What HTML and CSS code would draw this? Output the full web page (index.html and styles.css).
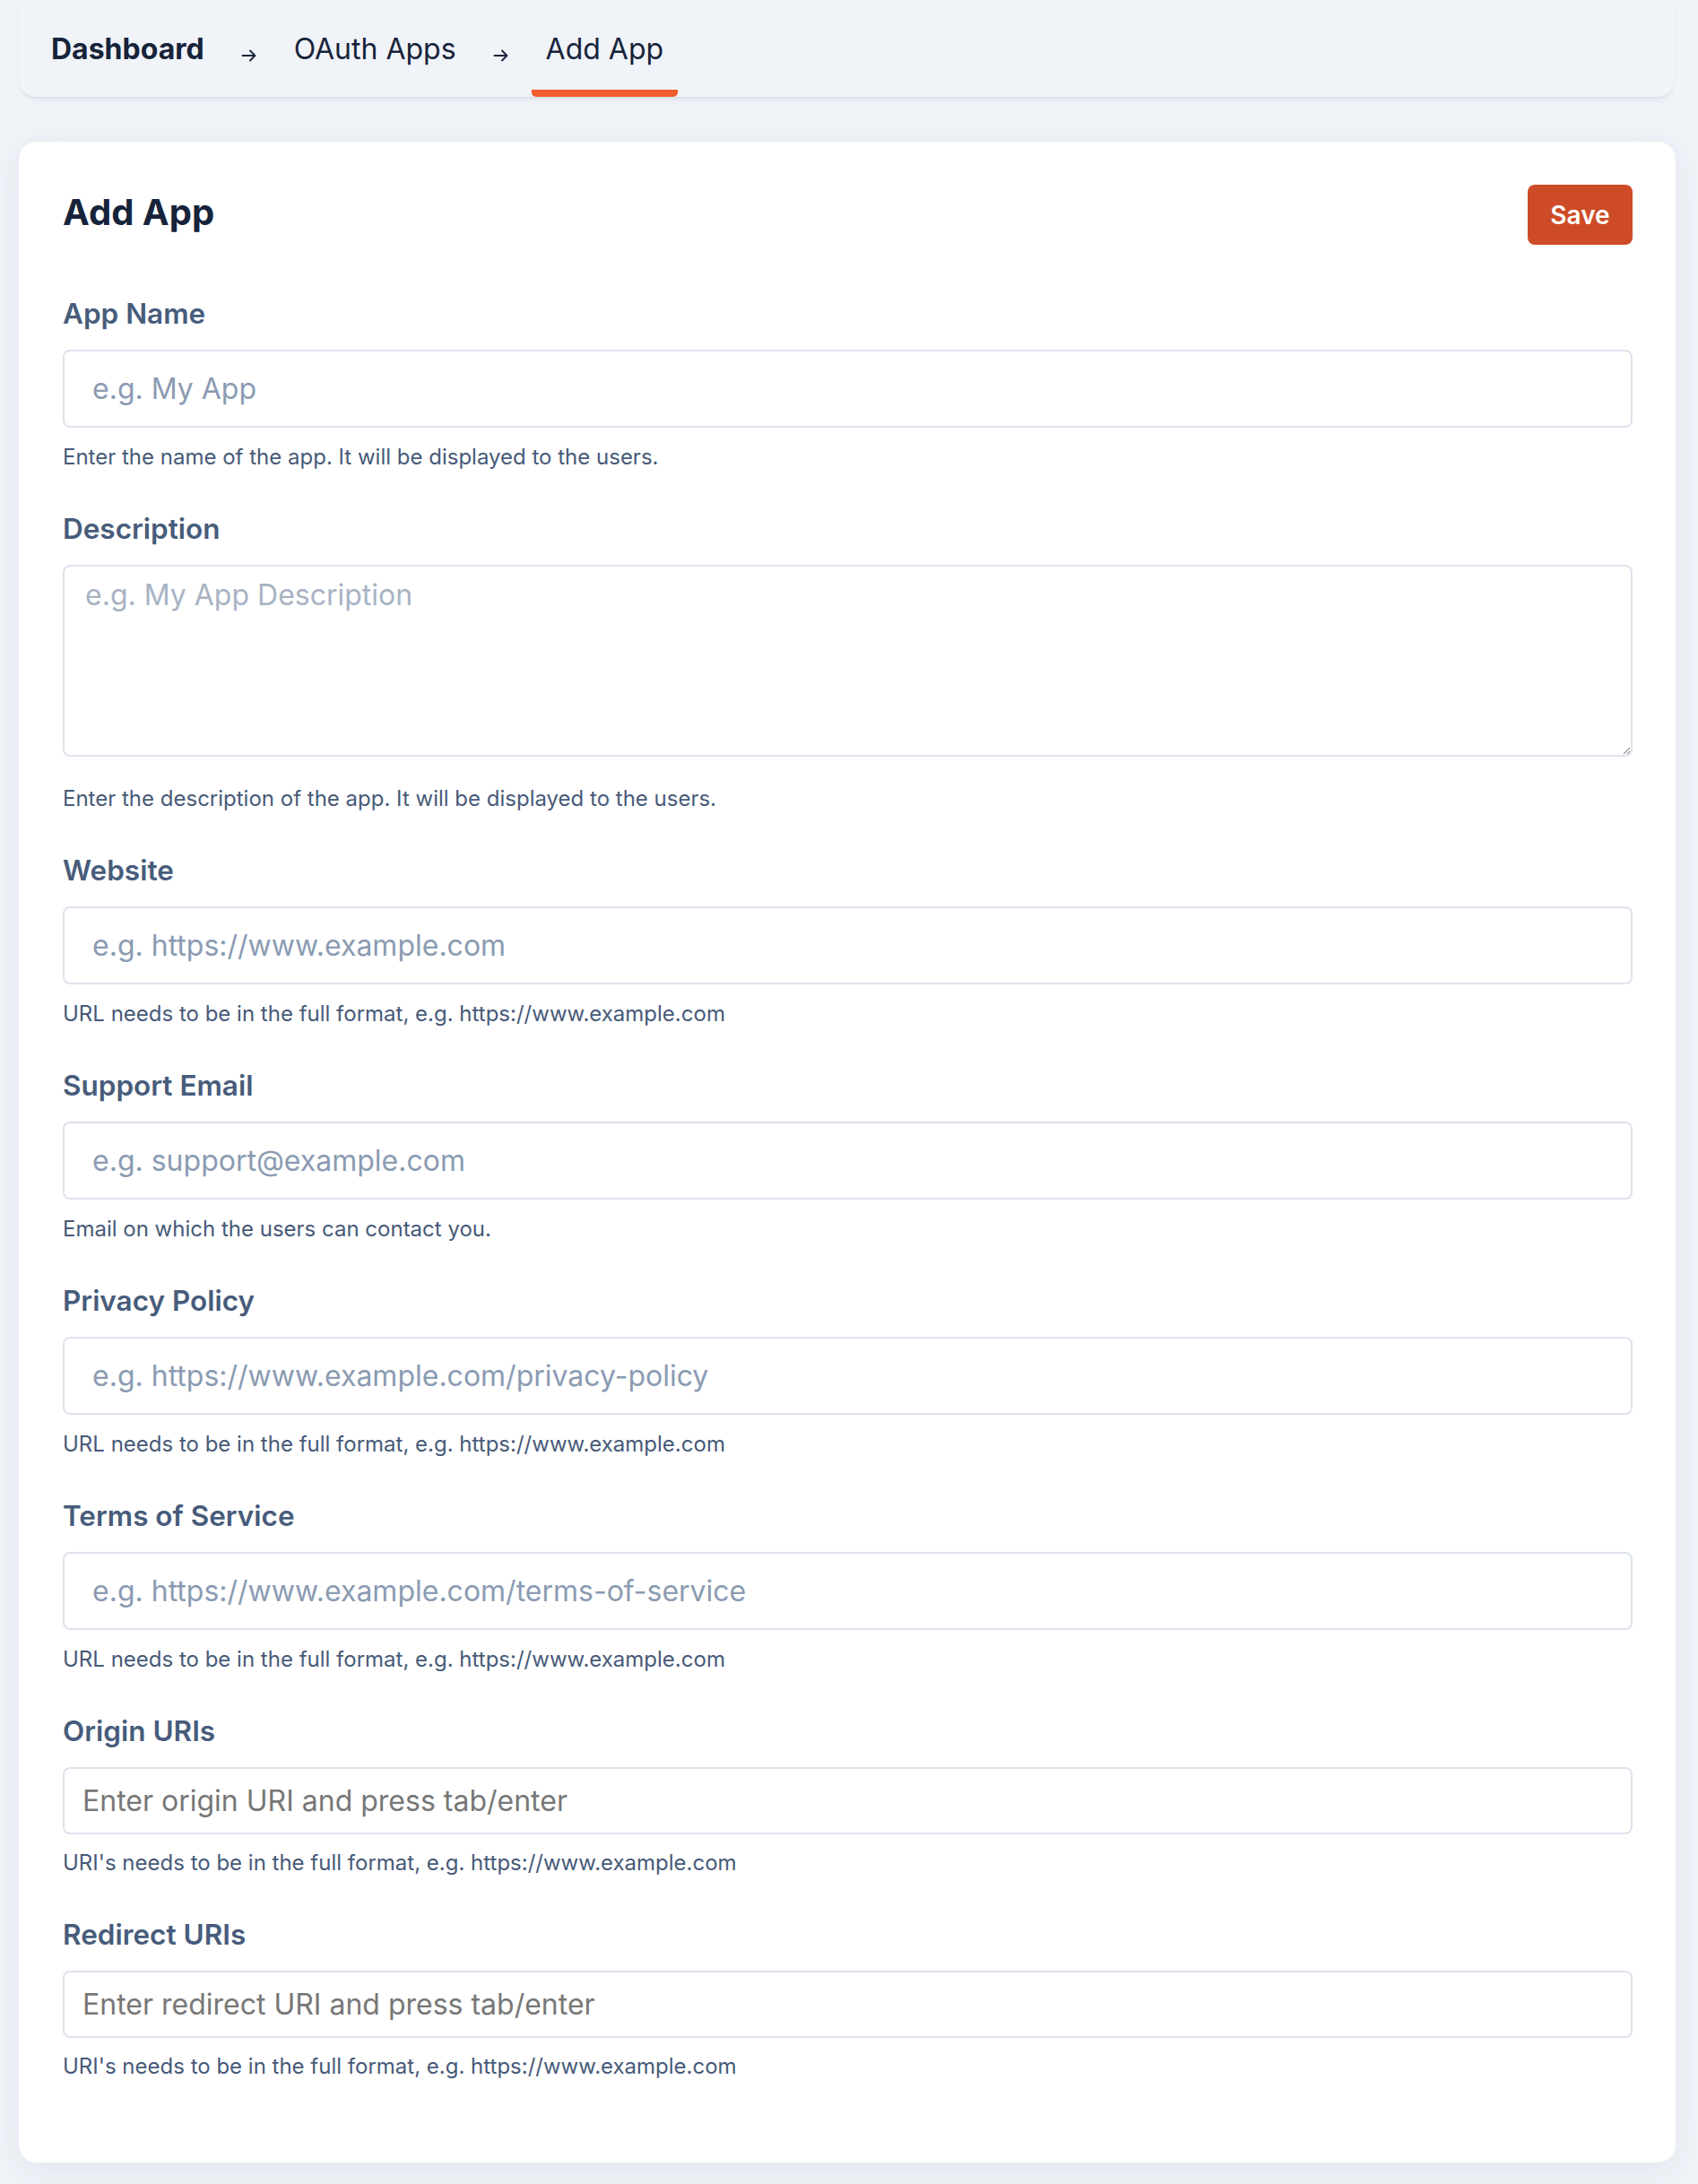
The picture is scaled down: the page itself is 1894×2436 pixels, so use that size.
FILE: index.html
```html
<!DOCTYPE html>
<html lang="en">
<head>
<meta charset="utf-8">
<title>Add App</title>
<link rel="stylesheet" href="styles.css">
</head>
<body>
<nav class="crumbs">
  <a class="crumb crumb--strong">Dashboard</a>
  <svg class="crumb-arrow" width="18" height="16" viewBox="0 0 18 16"><path d="M1.5 8h14M10 2.5l5.5 5.5-5.5 5.5" fill="none" stroke="#16233a" stroke-width="1.8" stroke-linecap="round" stroke-linejoin="round"/></svg>
  <a class="crumb">OAuth Apps</a>
  <svg class="crumb-arrow" width="18" height="16" viewBox="0 0 18 16"><path d="M1.5 8h14M10 2.5l5.5 5.5-5.5 5.5" fill="none" stroke="#16233a" stroke-width="1.8" stroke-linecap="round" stroke-linejoin="round"/></svg>
  <a class="crumb crumb--active">Add App</a>
</nav>

<main class="card">
  <div class="card-head">
    <h1 class="card-title">Add App</h1>
    <button class="btn-save" type="button">Save</button>
  </div>

  <div class="field">
    <label class="field-label">App Name</label>
    <input class="input" type="text" placeholder="e.g. My App">
    <p class="help">Enter the name of the app. It will be displayed to the users.</p>
  </div>

  <div class="field">
    <label class="field-label">Description</label>
    <textarea class="textarea" placeholder="e.g. My App Description"></textarea>
    <p class="help help--textarea">Enter the description of the app. It will be displayed to the users.</p>
  </div>

  <div class="field">
    <label class="field-label">Website</label>
    <input class="input" type="text" placeholder="e.g. https://www.example.com">
    <p class="help">URL needs to be in the full format, e.g. https://www.example.com</p>
  </div>

  <div class="field">
    <label class="field-label">Support Email</label>
    <input class="input" type="text" placeholder="e.g. support@example.com">
    <p class="help">Email on which the users can contact you.</p>
  </div>

  <div class="field">
    <label class="field-label">Privacy Policy</label>
    <input class="input" type="text" placeholder="e.g. https://www.example.com/privacy-policy">
    <p class="help">URL needs to be in the full format, e.g. https://www.example.com</p>
  </div>

  <div class="field">
    <label class="field-label">Terms of Service</label>
    <input class="input" type="text" placeholder="e.g. https://www.example.com/terms-of-service">
    <p class="help">URL needs to be in the full format, e.g. https://www.example.com</p>
  </div>

  <div class="field">
    <label class="field-label">Origin URIs</label>
    <input class="input input--tags" type="text" placeholder="Enter origin URI and press tab/enter">
    <p class="help help--tags">URI's needs to be in the full format, e.g. https://www.example.com</p>
  </div>

  <div class="field field--last">
    <label class="field-label">Redirect URIs</label>
    <input class="input input--tags" type="text" placeholder="Enter redirect URI and press tab/enter">
    <p class="help help--tags">URI's needs to be in the full format, e.g. https://www.example.com</p>
  </div>
</main>
</body>
</html>
```

FILE: styles.css
```css
* { box-sizing: border-box; }

html, body {
  margin: 0;
  padding: 0;
  background: #f0f3f8;
  font-family: Inter, "Noto Sans", "Liberation Sans", sans-serif;
  color: #16233a;
}

body {
  padding-bottom: 26px;
}

/* breadcrumb bar */
.crumbs {
  display: flex;
  align-items: stretch;
  gap: 25px;
  height: 110px;
  margin: 0 26px 0 21px;
  padding-left: 20px;
  border-bottom: 2px solid #dde3eb;
  border-radius: 0 0 20px 20px;
  box-shadow: 0 3px 4px rgba(30, 50, 80, 0.04);
}

.crumb {
  position: relative;
  display: block;
  padding: 31px 16px 0;
  font-size: 32px;
  line-height: 48px;
  font-weight: 400;
  color: #16233a;
  text-decoration: none;
}

.crumb--strong { font-weight: 700; }

.crumb--active::after {
  content: "";
  position: absolute;
  left: 0;
  right: 0;
  bottom: 0;
  height: 8px;
  background: #f15d2c;
  border-radius: 0 0 5px 5px;
}

.crumb-arrow {
  align-self: flex-start;
  margin-top: 54px;
  flex: none;
}

/* card */
.card {
  margin: 48px 25px 0 21px;
  padding: 48px 48px 89px 49px;
  background: #ffffff;
  border-radius: 20px;
  box-shadow: 0 8px 40px rgba(40, 60, 90, 0.07);
}

.card-head {
  display: flex;
  align-items: center;
  justify-content: space-between;
  height: 67px;
  margin-bottom: 53px;
}

.card-title {
  margin: 0;
  font-size: 40px;
  line-height: 48px;
  font-weight: 700;
  color: #16233a;
  position: relative;
  top: -3px;
}

.btn-save {
  width: 117px;
  height: 67px;
  border: 0;
  border-radius: 8px;
  background: #cd4c27;
  color: #ffffff;
  font-family: inherit;
  font-size: 28px;
  font-weight: 600;
  padding: 0;
}

/* fields */
.field {
  display: flex;
  flex-direction: column;
  margin-bottom: 38px;
}

.field--last { margin-bottom: 0; }

.field-label {
  display: block;
  font-size: 31.5px;
  line-height: 48px;
  font-weight: 600;
  color: #475c7b;
  margin-bottom: 16px;
}

.input {
  display: block;
  width: 100%;
  height: 87px;
  margin: 0;
  padding: 0 20px 0 31px;
  border: 2px solid #dde3ec;
  border-radius: 8px;
  background: #ffffff;
  font-family: inherit;
  font-size: 32px;
  color: #16233a;
  outline: none;
}

.input::placeholder { color: #8b9bb2; opacity: 1; }

.input--tags {
  height: 75px;
  padding-left: 20px;
  font-size: 32px;
}

.input--tags::placeholder { color: #777777; }

.textarea {
  display: block;
  width: 100%;
  height: 214px;
  margin: 0;
  padding: 8px 23px;
  border: 2px solid #dde3ec;
  border-radius: 8px;
  background: #ffffff;
  font-family: inherit;
  font-size: 32px;
  line-height: 48px;
  color: #16233a;
  outline: none;
  resize: vertical;
}

.textarea::placeholder { color: #a8b3c3; opacity: 1; }

.help {
  margin: 15px 0 0;
  font-size: 24px;
  line-height: 36px;
  font-weight: 400;
  color: #475a78;
}

.help--textarea { margin-top: 29px; }
.help--tags { margin-top: 14px; }
```
